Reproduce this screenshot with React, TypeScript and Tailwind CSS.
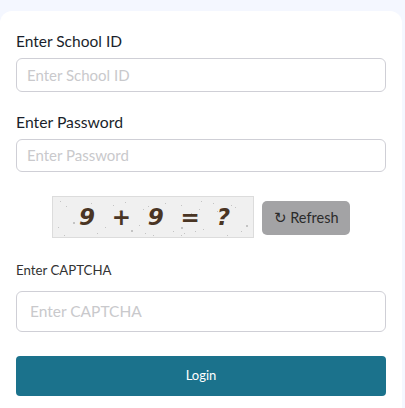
import React from 'react';

const specks = [
  [7, 4, 1], [13, 9, 1], [5, 30, 1], [11, 38, 1], [20, 25, 2], [30, 12, 1], [33, 18, 2], [34, 24, 1], [38, 6, 1], [44, 36, 1], [52, 30, 1],
  [60, 8, 1], [66, 14, 1], [72, 5, 1], [78, 33, 2], [86, 28, 1], [90, 12, 1], [95, 9, 1], [100, 38, 1], [92, 36, 1], [108, 20, 1], [112, 6, 1],
  [120, 34, 1], [128, 8, 1], [134, 24, 1], [128, 38, 1], [138, 16, 1], [146, 12, 1], [150, 32, 1], [128, 30, 2], [131, 36, 1], [160, 6, 1],
  [168, 26, 1], [174, 38, 1], [182, 10, 1], [188, 34, 1], [164, 14, 1], [193, 28, 2], [178, 8, 1], [148, 4, 1], [142, 34, 1],
];

const Field = ({ placeholder, className }: { placeholder: string; className: string }) => (
  <input
    placeholder={placeholder}
    className={`w-full rounded-md border border-[#cfcfd6] bg-white text-[#333] outline-none placeholder:text-[#c9c9cc] ${className}`}
  />
);

export default function App() {
  return (
    <div className="h-[408px] overflow-hidden bg-[#f4f7ff] pr-[3px] pt-[11px] font-['Lato','Noto_Sans',sans-serif]">
      <div className="flex h-full flex-col rounded-t-xl bg-white px-4 pt-5">
        <label className="text-[15.5px] leading-[20px] text-[#1a1f2b]">Enter School ID</label>
        <Field placeholder="Enter School ID" className="mt-[7px] h-[34px] px-[10px] pb-[1px] text-[15px]" />

        <label className="mt-5 text-[15.75px] leading-[20px] text-[#1a1f2b]">Enter Password</label>
        <Field placeholder="Enter Password" className="mt-[7px] h-[33px] px-[10px] pb-[1px] text-[15px]" />

        {/* Captcha row */}
        <div className="mt-6 flex items-center justify-center gap-2">
          <div className="relative flex h-[42px] w-[202px] items-center justify-between border border-[#dcdcdc] bg-[#f0f0f0] pl-[26px] pr-[23px] font-['DejaVu_Sans',sans-serif] text-[23px] font-bold italic text-[#4a3524]">
            <svg className="absolute inset-0" width="200" height="40" viewBox="0 0 200 40">
              {specks.map(([x, y, s], i) => (
                <rect key={i} x={x} y={y} width={s} height={s} fill="#c4c4c4" />
              ))}
            </svg>
            <span className="relative">9</span>
            <span className="relative">+</span>
            <span className="relative">9</span>
            <span className="relative">=</span>
            <span className="relative">?</span>
          </div>
          <button className="mt-[2px] h-[34px] w-[88px] rounded-[5px] bg-[#a3a3a5] text-[14.5px] text-[#2b2b2b]">↻ Refresh</button>
        </div>

        <label className="mt-[23px] text-[13.25px] leading-[18px] text-[#333]">Enter CAPTCHA</label>
        <Field placeholder="Enter CAPTCHA" className="mt-[12px] h-[41px] px-[13px] pb-[1px] text-[15.5px]" />

        <button className="mt-6 h-10 w-full rounded-[4px] bg-[#1b728c] text-[13px] text-white">Login</button>
      </div>
    </div>
  );
}
